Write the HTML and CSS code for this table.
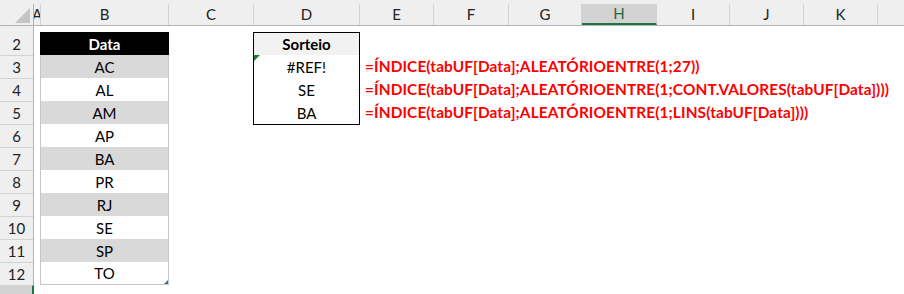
FILE: index.html
```html
<!DOCTYPE html>
<html lang="pt">
<head>
<meta charset="utf-8">
<title>Sorteio</title>
<link rel="stylesheet" href="styles.css">
</head>
<body>
<div class="sheet">
  <div class="colheads">
    <div class="corner">
      <svg class="corner-tri" width="33" height="21" viewBox="0 0 33 21"><polygon points="30,4 30,19 15,19" fill="#c4c4c4"/></svg>
    </div>
    <div class="ch w-a">A</div>
    <div class="ch w-b">B</div>
    <div class="ch w-c">C</div>
    <div class="ch w-d">D</div>
    <div class="ch w-e">E</div>
    <div class="ch w-f">F</div>
    <div class="ch w-g">G</div>
    <div class="ch w-h sel">H</div>
    <div class="ch w-i">I</div>
    <div class="ch w-j">J</div>
    <div class="ch w-k">K</div>
    <div class="ch w-l"></div>
  </div>
  <div class="body">
    <div class="rowheads">
      <div class="rh first">2</div>
      <div class="rh">3</div>
      <div class="rh">4</div>
      <div class="rh">5</div>
      <div class="rh">6</div>
      <div class="rh">7</div>
      <div class="rh">8</div>
      <div class="rh">9</div>
      <div class="rh">10</div>
      <div class="rh">11</div>
      <div class="rh">12</div>
      <div class="rh sel"></div>
    </div>
    <div class="cells">
      <div class="sp-a"></div>
      <div class="tbl-data">
        <div class="td head">Data</div>
        <div class="td band">AC</div>
        <div class="td">AL</div>
        <div class="td band">AM</div>
        <div class="td">AP</div>
        <div class="td band">BA</div>
        <div class="td">PR</div>
        <div class="td band">RJ</div>
        <div class="td">SE</div>
        <div class="td band">SP</div>
        <div class="td last">TO<span class="handle"></span></div>
      </div>
      <div class="sp-c"></div>
      <div class="tbl-sort">
        <div class="ts head">Sorteio</div>
        <div class="ts err"><span class="err-tri"></span>#REF!</div>
        <div class="ts">SE</div>
        <div class="ts">BA</div>
      </div>
      <div class="formulas">
        <div class="fx">=ÍNDICE(tabUF[Data];ALEATÓRIOENTRE(1;27))</div>
        <div class="fx">=ÍNDICE(tabUF[Data];ALEATÓRIOENTRE(1;CONT.VALORES(tabUF[Data])))</div>
        <div class="fx">=ÍNDICE(tabUF[Data];ALEATÓRIOENTRE(1;LINS(tabUF[Data])))</div>
      </div>
    </div>
  </div>
</div>
</body>
</html>
```

FILE: styles.css
```css
* { box-sizing: border-box; }
html, body { margin: 0; padding: 0; background: #ffffff; }
body {
  font-family: Lato, "Liberation Sans", sans-serif;
  font-size: 15px;
  color: #000;
  width: 904px;
  height: 294px;
  overflow: hidden;
}
.sheet { display: flex; flex-direction: column; width: 904px; height: 294px; }

/* column headers */
.colheads {
  display: flex;
  height: 26px;
  padding-top: 4px;
  background: #efefef;
  border-bottom: 1px solid #b3b3b3;
}
.corner {
  width: 34px;
  flex: none;
  height: 21px;
  border-right: 1px solid #b3b3b3;
}
.corner-tri { display: block; }
.ch {
  flex: none;
  height: 21px;
  border-right: 1px solid #d2d2d2;
  display: flex;
  align-items: center;
  justify-content: center;
  overflow: hidden;
  color: #222;
  font-size: 15px;
  line-height: 21px;
}
.ch.sel {
  background: #d3d3d3;
  color: #1d6b3f;
  border-bottom: 2px solid #217346;
}
.w-a { width: 7px; }
.w-b { width: 128px; }
.w-c { width: 85px; }
.w-d { width: 106px; }
.w-e { width: 74px; }
.w-f { width: 75px; }
.w-g { width: 73px; }
.w-h { width: 75px; }
.w-i { width: 73px; }
.w-j { width: 74px; }
.w-k { width: 74px; }
.w-l { flex: 1; border-right: none; }

/* body */
.body { display: flex; flex: 1; }
.rowheads {
  width: 34px;
  flex: none;
  background: #efefef;
  border-right: 1px solid #b3b3b3;
  display: flex;
  flex-direction: column;
}
.rh {
  height: 23px;
  border-top: 1px solid #d2d2d2;
  display: flex;
  align-items: center;
  justify-content: center;
  color: #222;
  font-size: 15px;
}
.rh.first { height: 29px; border-top: none; padding-top: 6px; }
.rh.sel {
  flex: 1;
  background: #d3d3d3;
  border-right: 2px solid #217346;
  margin-right: -1px;
}

.cells { display: flex; align-items: flex-start; padding-top: 6px; flex: 1; }
.sp-a { width: 6px; flex: none; }
.sp-c { width: 84px; flex: none; }

.tbl-data {
  width: 129px;
  flex: none;
  border: 1px solid #c6c6c6;
  border-top: none;
  display: flex;
  flex-direction: column;
}
.td {
  height: 23px;
  display: flex;
  align-items: center;
  justify-content: center;
  background: #fff;
}
.td.band { background: #d9d9d9; }
.td.head {
  background: #000;
  color: #fff;
  font-weight: 700;
  margin: 0 -1px;
}
.td.last { height: 22px; position: relative; }
.handle {
  position: absolute;
  right: 0;
  bottom: 0;
  width: 0;
  height: 0;
  border-left: 4px solid transparent;
  border-bottom: 4px solid #2e6fb7;
}

.tbl-sort {
  width: 107px;
  flex: none;
  border: 1px solid #000;
  display: flex;
  flex-direction: column;
}
.ts {
  height: 23px;
  display: flex;
  align-items: center;
  justify-content: center;
}
.ts.head {
  height: 22px;
  background: #f2f2f2;
  font-weight: 700;
}
.ts.err { position: relative; }
.err-tri {
  position: absolute;
  left: 0;
  top: 0;
  width: 0;
  height: 0;
  border-top: 6px solid #1e7b34;
  border-right: 6px solid transparent;
}

.formulas {
  padding-top: 23px;
  padding-left: 5px;
  display: flex;
  flex-direction: column;
  white-space: nowrap;
}
.fx {
  height: 23px;
  line-height: 23px;
  color: #ff0000;
  font-weight: 700;
  font-size: 15.4px;
  letter-spacing: 0.1px;
}
```
